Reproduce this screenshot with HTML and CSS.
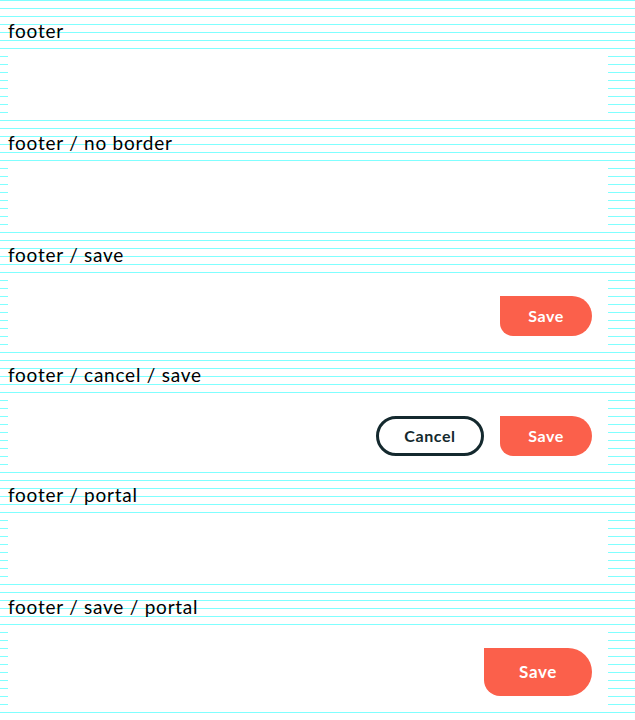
FILE: index.html
```html
<!DOCTYPE html>
<html lang="en">
<head>
<meta charset="utf-8">
<title>Footer variants</title>
<link rel="stylesheet" href="styles.css">
</head>
<body>
<main class="page">
  <section class="demo">
    <div class="label">footer</div>
    <div class="footer footer--border"></div>
  </section>
  <section class="demo">
    <div class="label">footer / no border</div>
    <div class="footer"></div>
  </section>
  <section class="demo">
    <div class="label">footer / save</div>
    <div class="footer footer--actions">
      <button class="btn btn--primary" type="button">Save</button>
    </div>
  </section>
  <section class="demo">
    <div class="label">footer / cancel / save</div>
    <div class="footer footer--actions">
      <button class="btn btn--secondary" type="button">Cancel</button>
      <button class="btn btn--primary" type="button">Save</button>
    </div>
  </section>
  <section class="demo">
    <div class="label">footer / portal</div>
    <div class="footer"></div>
  </section>
  <section class="demo">
    <div class="label">footer / save / portal</div>
    <div class="footer footer--portal">
      <button class="btn btn--primary btn--large" type="button">Save</button>
    </div>
  </section>
</main>
</body>
</html>
```
FILE: styles.css
```css
html {
  min-height: 100%;
  background: #ffffff repeating-linear-gradient(to bottom, #80ffff 0, #80ffff 1px, transparent 1px, transparent 8px);
}

body {
  margin: 0;
  font-family: Lato, "Noto Sans", sans-serif;
  color: #000000;
}

.page {
  padding: 8px 27px 0 8px;
}

.label {
  box-sizing: border-box;
  height: 41px;
  padding-top: 13px;
  font-size: 19px;
  line-height: 20px;
  font-weight: 400;
  letter-spacing: 0.75px;
}

.footer {
  box-sizing: border-box;
  height: 71px;
  background: #ffffff;
  display: flex;
  justify-content: flex-end;
  align-items: flex-start;
  gap: 16px;
  padding: 23px 16px 0;
}

.footer--actions {
  height: 79px;
}

.footer--portal {
  height: 87px;
}

.btn {
  box-sizing: border-box;
  height: 40px;
  border: 0;
  margin: 0;
  padding: 0 0 2px;
  font-family: Lato, "Noto Sans", sans-serif;
  font-size: 16px;
  font-weight: 700;
  letter-spacing: 0.6px;
  cursor: pointer;
}

.btn--primary {
  width: 92px;
  background: #fb604b;
  color: #ffffff;
  border-radius: 0 20px 20px 13px;
}

.btn--secondary {
  width: 108px;
  background: #ffffff;
  color: #14292e;
  border: 3px solid #14292e;
  border-radius: 20px;
}

.btn--large {
  width: 108px;
  height: 48px;
  font-size: 17px;
  border-radius: 0 24px 24px 16px;
}
```
